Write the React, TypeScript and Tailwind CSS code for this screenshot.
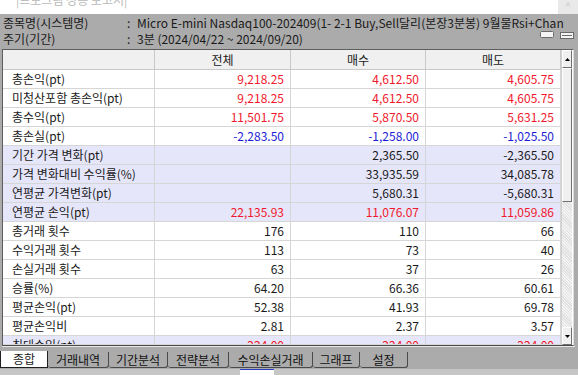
const RED = 'text-[#f0182c]';
const BLUE = 'text-[#1c1cd6]';
const DARK = 'text-[#1a1a1a]';

type Row = {
  label: string;
  vals: [string, string, string];
  color: string;
  lav?: boolean;
};

const rows: Row[] = [
  { label: '총손익(pt)', vals: ['9,218.25', '4,612.50', '4,605.75'], color: RED },
  { label: '미청산포함 총손익(pt)', vals: ['9,218.25', '4,612.50', '4,605.75'], color: RED },
  { label: '총수익(pt)', vals: ['11,501.75', '5,870.50', '5,631.25'], color: RED },
  { label: '총손실(pt)', vals: ['-2,283.50', '-1,258.00', '-1,025.50'], color: BLUE },
  { label: '기간 가격 변화(pt)', vals: ['', '2,365.50', '-2,365.50'], color: DARK, lav: true },
  { label: '가격 변화대비 수익률(%)', vals: ['', '33,935.59', '34,085.78'], color: DARK, lav: true },
  { label: '연평균 가격변화(pt)', vals: ['', '5,680.31', '-5,680.31'], color: DARK, lav: true },
  { label: '연평균 손익(pt)', vals: ['22,135.93', '11,076.07', '11,059.86'], color: RED, lav: true },
  { label: '총거래 횟수', vals: ['176', '110', '66'], color: DARK },
  { label: '수익거래 횟수', vals: ['113', '73', '40'], color: DARK },
  { label: '손실거래 횟수', vals: ['63', '37', '26'], color: DARK },
  { label: '승률(%)', vals: ['64.20', '66.36', '60.61'], color: DARK },
  { label: '평균손익(pt)', vals: ['52.38', '41.93', '69.78'], color: DARK },
  { label: '평균손익비', vals: ['2.81', '2.37', '3.57'], color: DARK },
  { label: '최대수익(pt)', vals: ['224.00', '224.00', '224.00'], color: RED, lav: true },
];

const tabs = [
  { name: '종합', w: 'w-[48px]' },
  { name: '거래내역', w: 'w-[61px]' },
  { name: '기간분석', w: 'w-[59px]' },
  { name: '전략분석', w: 'w-[61px]' },
  { name: '수익손실거래', w: 'w-[84px]' },
  { name: '그래프', w: 'w-[47px]' },
  { name: '설정', w: 'w-[48px]' },
];

const colW = ['w-[136px]', 'w-[135px]', 'w-[135px]'];

function Arrow({ up }: { up?: boolean }) {
  return (
    <svg width="5" height="3" viewBox="0 0 5 3">
      <path d={up ? 'M2.5 0 L5 3 L0 3 Z' : 'M0 0 L5 0 L2.5 3 Z'} fill="#000" />
    </svg>
  );
}

export default function App() {
  return (
    <div className="w-[578px] h-[375px] overflow-hidden bg-[#ababab] flex flex-col font-['Noto_Sans_CJK_KR',sans-serif] text-[12px] text-[#1a1a1a]">
      {/* title strip */}
      <div className="h-[14px] bg-white flex justify-between overflow-hidden shrink-0">
        <div className="pl-[16px] -mt-[8px] text-[#b8b8b8] text-[12px] leading-[16px]">|프로그램 성능 보고서|</div>
        <div className="w-[20px] h-[14px] bg-[#e9e9e9] flex justify-center text-[#c8c8c8] text-[10px] leading-[12px]">^</div>
      </div>

      {/* info */}
      <div className="h-[35px] shrink-0 flex flex-col pt-[1px]">
        <div className="flex h-[16px] leading-[16px] whitespace-nowrap">
          <span className="w-[127px] pl-[3px]">종목명(시스템명)</span>
          <span className="w-[10px]">:</span>
          <span>Micro E-mini Nasdaq100-202409(1- 2-1 Buy,Sell달리(본장3분봉) 9월물Rsi+Chan</span>
        </div>
        <div className="flex h-[16px] leading-[16px] whitespace-nowrap">
          <span className="w-[127px] pl-[3px]">주기(기간)</span>
          <span className="w-[10px]">:</span>
          <span className="flex-1">3분 (2024/04/22 ~ 2024/09/20)</span>
          <div className="flex items-start gap-[6px] pr-[4px]">
            <svg width="14" height="7" viewBox="0 0 14 7">
              <rect x="0.5" y="0.5" width="13" height="6" rx="1" fill="#f4f4f4" stroke="#6a6a6a" />
            </svg>
            <svg width="14" height="8" viewBox="0 0 14 8">
              <rect x="0.5" y="1.5" width="13" height="6" fill="#f4f4f4" stroke="#6a6a6a" />
              <line x1="2" y1="4.5" x2="12" y2="4.5" stroke="#6a6a6a" />
            </svg>
          </div>
        </div>
      </div>

      {/* table box */}
      <div className="ml-[2px] w-[572px] h-[297px] shrink-0 border-t border-l border-[#5e5e5e] border-r border-r-[#dcdcdc] border-b border-b-[#4a4a4a] flex bg-white overflow-hidden">
        <div className="flex flex-col w-[558px] overflow-hidden">
          {/* header */}
          <div className="flex h-[20px] shrink-0 bg-[#f0f0f0] border-b border-[#c8c8c8]">
            <div className="w-[152px] border-r border-[#c8c8c8]" />
            {['전체', '매수', '매도'].map((h, i) => (
              <div key={h} className={`${colW[i]} border-r border-[#c8c8c8] flex items-center justify-center leading-[19px]`}>
                {h}
              </div>
            ))}
          </div>
          {rows.map((r, idx) => (
            <div
              key={r.label}
              className={`flex shrink-0 border-b border-[#d6d6d6] leading-[18px] overflow-hidden ${
                idx === rows.length - 1 ? 'h-[9px]' : 'h-[19px]'
              } ${r.lav ? 'bg-[#e6e6fa]' : 'bg-white'}`}
            >
              <div className="w-[152px] pl-[9px] border-r border-[#d6d6d6] whitespace-nowrap">{r.label}</div>
              {r.vals.map((v, i) => (
                <div key={i} className={`${colW[i]} pr-[6px] text-right border-r border-[#d6d6d6] ${r.color}`}>
                  {v}
                </div>
              ))}
            </div>
          ))}
        </div>
        {/* scrollbar */}
        <div className="w-[11px] flex flex-col bg-[#e4e4e4] border-l border-[#d0d0d0]">
          <div className="h-[18px] shrink-0 bg-[#f0f0f0] border-t border-l border-white border-r border-b border-r-[#707070] border-b-[#707070] flex items-center justify-center">
            <Arrow up />
          </div>
          <div className="h-[134px] shrink-0 bg-[#f0f0f0] border-t border-l border-white border-r border-b border-r-[#707070] border-b-[#707070]" />
          <div className="flex-1 bg-[repeating-linear-gradient(45deg,#f4f4f4_0px,#f4f4f4_1px,#e0e0e0_1px,#e0e0e0_2px)]" />
          <div className="h-[18px] shrink-0 bg-[#f0f0f0] border-t border-l border-white border-r border-b border-r-[#707070] border-b-[#707070] flex items-center justify-center">
            <Arrow />
          </div>
        </div>
      </div>
      <div className="h-[1px] shrink-0 ml-[2px] w-[573px] bg-[#e8e8e8]" />

      {/* tabs */}
      <div className="h-[22px] shrink-0 flex items-start pt-[5px]">
        {tabs.map((t, i) => (
          <div
            key={t.name}
            className={`${t.w} flex items-center justify-center leading-[14px] ${
              i === 0
                ? 'bg-white border-x border-b border-[#202020] -mt-[1px] h-[17px]'
                : 'h-[16px] border-r border-b border-[#4a4a4a] rounded-b-[3px] bg-[#ababab] text-[#111]'
            }`}
          >
            {t.name}
          </div>
        ))}
      </div>

      {/* bottom strip */}
      <div className="flex-1 bg-[#c6c6c6] flex">
        <div className="w-[240px]" />
        <div className="w-[34px] bg-white border-t border-[#2a3cc8]" />
        <div className="flex-1 bg-[#c6c6c6]" />
      </div>
    </div>
  );
}
